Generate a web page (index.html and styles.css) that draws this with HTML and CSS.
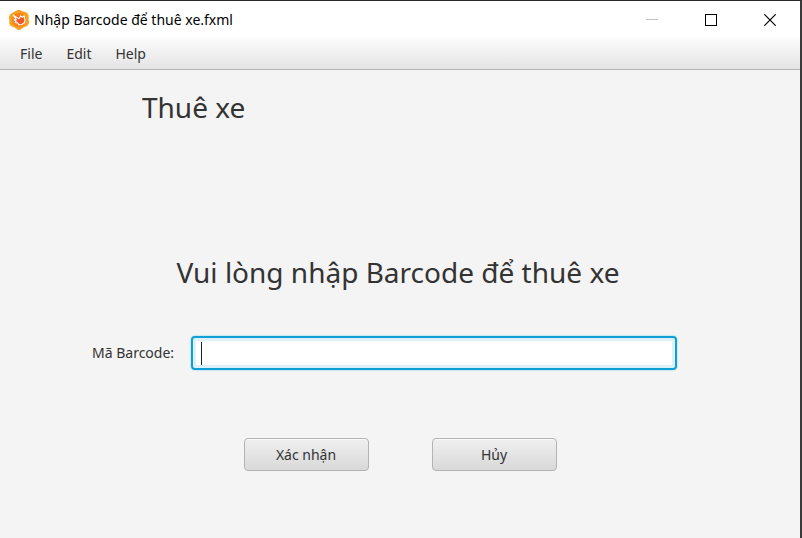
FILE: index.html
```html
<!DOCTYPE html>
<html lang="vi">
<head>
<meta charset="utf-8">
<title>Nhập Barcode để thuê xe.fxml</title>
<link rel="stylesheet" href="styles.css">
</head>
<body>
<div class="window">
  <header class="titlebar">
    <svg class="app-icon" viewBox="0 0 20 20" aria-hidden="true">
      <path fill="#f9a01f" d="M10 0c2 0 2.600 1.100 4.500 1.600S18.700 2.700 19.400 5s-.2 3 .3 5 .6 3.500-.7 5-2.600 1.700-4.500 2.600S12 20 10 20s-2.500-1.300-4.500-2.400S2.300 16.800 1 15s-.3-3-.7-5S-.2 6.500.8 5s2.800-2.300 4.700-3.300S8 0 10 0z"/>
      <circle cx="10" cy="10" r="7" fill="#f58220"/>
      <circle cx="11" cy="10.200" r="4" fill="#f0562b"/>
      <path fill="none" stroke="#fff" stroke-width="1.100" stroke-linecap="round" stroke-linejoin="round" d="M4.200 5.200l5.600 3.400M4.200 5.200l3 4.200M7.200 9.400l-1.900.5 2 1.300-1 1.300 2.500.4 1 1.900 3-.3 2.600-1.700.6-2.800-.9-4.200-1.700 1.600-1.900-1.500-1.100 2.300"/>
    </svg>
    <h1 class="title">Nhập Barcode để thuê xe.fxml</h1>
    <div class="controls">
      <button class="control" type="button" aria-label="Minimize" disabled>
        <svg viewBox="0 0 12 12" shape-rendering="crispEdges"><path d="M0 5.500h12" stroke="#c4c4c4"/></svg>
      </button>
      <button class="control" type="button" aria-label="Maximize">
        <svg viewBox="0 0 12 12" shape-rendering="crispEdges"><path d="M.5 .5h11v11h-11z" fill="none" stroke="#000"/></svg>
      </button>
      <button class="control" type="button" aria-label="Close">
        <svg viewBox="0 0 12 12"><path d="M.3 .3l11.400 11.400M11.700 .3L.3 11.700" fill="none" stroke="#000" stroke-width="1.200"/></svg>
      </button>
    </div>
  </header>
  <nav class="menubar">
    <button class="menu" type="button">File</button>
    <button class="menu" type="button">Edit</button>
    <button class="menu" type="button">Help</button>
  </nav>
  <main class="content">
    <h2 class="screen-name">Thuê xe</h2>
    <p class="prompt">Vui lòng nhập Barcode để thuê xe</p>
    <form class="form">
      <div class="field">
        <label for="barcode">Mã Barcode:</label>
        <div class="input-wrap"><input id="barcode" type="text" autocomplete="off"></div>
      </div>
      <div class="actions">
        <button class="button" type="submit">Xác nhận</button>
        <button class="button" type="button">Hủy</button>
      </div>
    </form>
  </main>
</div>
</body>
</html>
```
FILE: styles.css
```css
* {
  box-sizing: border-box;
}

body {
  margin: 0;
  font: 14px/20px "Noto Sans", "Open Sans", sans-serif;
  color: #333;
}

button,
input {
  font: inherit;
  color: inherit;
}

.window {
  display: flex;
  flex-direction: column;
  min-height: 100vh;
  border-top: 1px solid #2b292c;
  border-right: 2px solid #3a3a3a;
  background: #f4f4f4;
}

.titlebar {
  display: flex;
  align-items: center;
  height: 37px;
  padding: 0 1px 0 9px;
  background: #fff;
}

.app-icon {
  width: 20px;
  height: 20px;
  margin-right: 5px;
}

.title {
  flex: 1;
  margin: 0;
  font-size: 14px;
  font-weight: 400;
  color: #000;
}

.controls {
  display: flex;
}

.control {
  display: flex;
  align-items: center;
  justify-content: center;
  width: 59px;
  height: 35px;
  padding: 0;
  border: 0;
  background: none;
}

.control svg {
  width: 12px;
  height: 12px;
}

.menubar {
  display: flex;
  gap: 4px;
  height: 32px;
  padding: 0 10px;
  border-bottom: 1px solid #b5b5b5;
  background: linear-gradient(#fbfbfb, #e4e4e4);
}

.menu {
  padding: 0 10px;
  border: 0;
  background: none;
}

.content {
  flex: 1;
  padding-top: 17px;
}

.screen-name,
.prompt {
  margin: 0;
  font-size: 28px;
  font-weight: 400;
  line-height: 40px;
}

.screen-name {
  padding-left: 142px;
}

.prompt {
  margin-top: 125px;
  padding-right: 4px;
  text-align: center;
}

.field {
  display: flex;
  align-items: center;
  gap: 17px;
  margin-top: 44px;
  padding: 0 123px 0 92px;
}

.input-wrap {
  position: relative;
  flex: 1;
}

.input-wrap input {
  display: block;
  width: 100%;
  height: 34px;
  padding: 0 8px;
  border: 2px solid #0f9fd3;
  border-radius: 4px;
  outline: 0;
  background: #fff;
  box-shadow: inset 0 0 0 3px #def1f8, 0 0 1px 1px #c9e8f3;
}

/* Text cursor */
.input-wrap::after {
  content: "";
  position: absolute;
  top: 6px;
  left: 10px;
  width: 1px;
  height: 23px;
  background: #222;
}

.actions {
  display: flex;
  justify-content: center;
  gap: 63px;
  margin-top: 68px;
}

.button {
  width: 125px;
  height: 33px;
  padding: 0;
  border: 1px solid #b3b3b3;
  border-radius: 4px;
  background: linear-gradient(#efefef, #d9d9d9);
  box-shadow: inset 0 1px #fafafa;
}
```
